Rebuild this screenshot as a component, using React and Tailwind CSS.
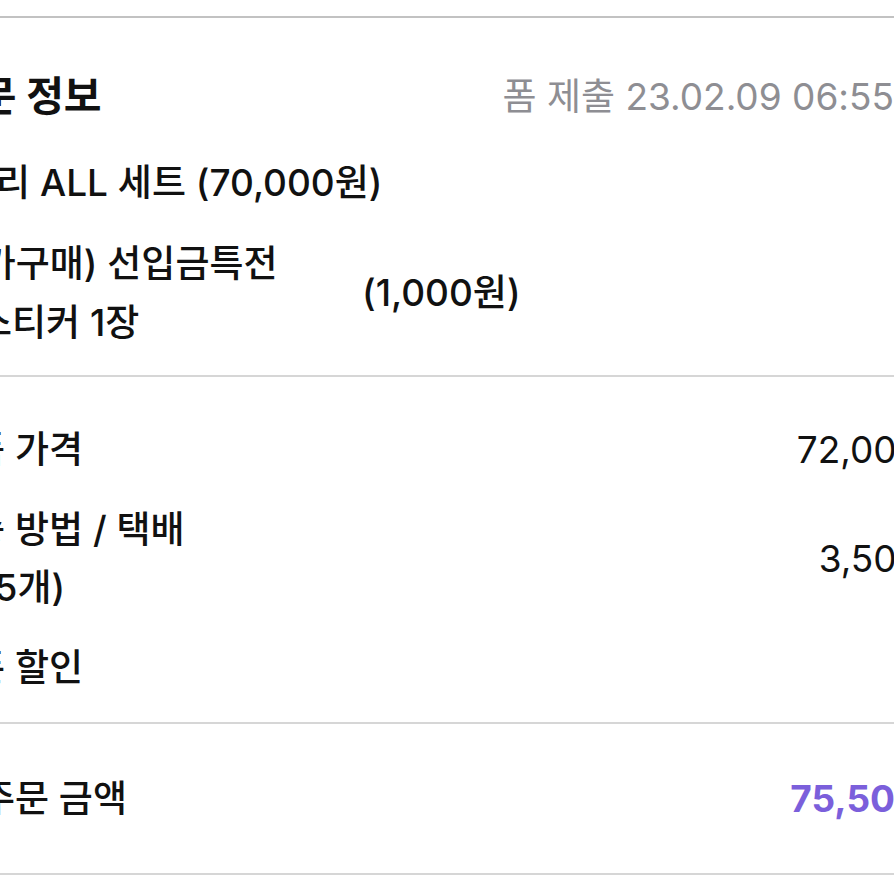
const ROWS_TOP = [
  { label: "상품 가격", value: "72,000원" },
];

function Divider({ tone = "light" }) {
  return (
    <div className={tone === "dark" ? "h-[2px] bg-[#c2c2c2]" : "h-[2px] bg-[#d6d6d6]"} />
  );
}

export default function App() {
  return (
    <div className="w-[894px] h-[894px] overflow-hidden bg-white text-[#111] font-['Inter','Noto_Sans_CJK_KR',sans-serif]">
      <div className="-ml-[66px] w-[1020px]">
        <div className="h-[16px]" />
        <Divider tone="dark" />

        {/* 주문 정보 */}
        <section className="pt-[49px] pb-[23px]">
          <div className="flex items-center justify-between h-[60px]">
            <h2 className="ml-[7px] text-[41px] font-bold whitespace-nowrap">주문 정보</h2>
            <span className="mr-[60px] text-[37px] text-[#8e8e93] whitespace-nowrap">
              폼 제출 23.02.09 06:55
            </span>
          </div>

          <div className="mt-[34px] flex items-center h-[44px] text-[37px] font-medium">
            <span className="ml-[62px] whitespace-nowrap">리 ALL 세트 (70,000원)</span>
          </div>

          <div className="mt-[29px] flex items-center text-[37px] font-medium">
            <div className="w-[428px] shrink-0 leading-[59px]">
              <div className="whitespace-nowrap">(추가구매) 선입금특전</div>
              <div className="ml-[44px] whitespace-nowrap">스티커 1장</div>
            </div>
            <span className="whitespace-nowrap">(1,000원)</span>
          </div>
        </section>

        <Divider />

        {/* 가격 */}
        <section className="pt-[51px] pb-[32px] pl-[3px] text-[37px] font-medium">
          {ROWS_TOP.map((r) => (
            <div key={r.label} className="flex items-center justify-between h-[44px]">
              <span className="whitespace-nowrap">{r.label}</span>
              <span className="text-[37px] font-normal whitespace-nowrap">{r.value}</span>
            </div>
          ))}

          <div className="mt-[29px] flex items-center justify-between">
            <div className="leading-[58px]">
              <div className="whitespace-nowrap">배송 방법 / 택배</div>
              <div className="whitespace-nowrap">(총 5개)</div>
            </div>
            <span className="text-[37px] font-normal whitespace-nowrap">3,500원</span>
          </div>

          <div className="mt-[29px] flex items-center justify-between h-[44px]">
            <span className="whitespace-nowrap">쿠폰 할인</span>
            <span className="text-[37px] font-normal whitespace-nowrap">0원</span>
          </div>
        </section>

        <Divider />

        {/* 총 주문 금액 */}
        <section className="pt-[53px] pb-[52px] pl-[3px]">
          <div className="flex items-center justify-between h-[44px]">
            <span className="text-[37px] font-medium whitespace-nowrap">총 주문 금액</span>
            <span className="text-[37px] font-bold text-[#7b5fdb] whitespace-nowrap">75,500원</span>
          </div>
        </section>

        <Divider />
      </div>
    </div>
  );
}
